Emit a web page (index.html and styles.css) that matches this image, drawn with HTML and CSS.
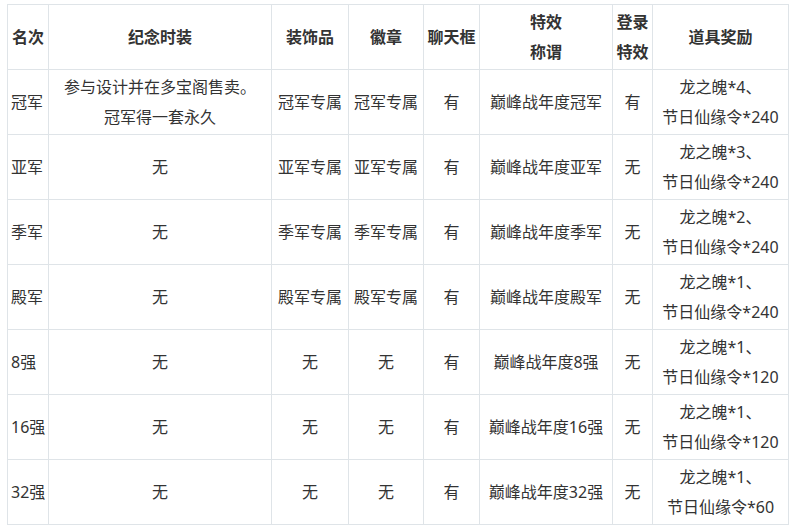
FILE: index.html
```html
<!DOCTYPE html>
<html lang="zh-CN">
<head>
<meta charset="utf-8">
<link rel="stylesheet" href="styles.css">
</head>
<body>
<table class="awards">
  <colgroup>
    <col class="c1"><col class="c2"><col class="c3"><col class="c4"><col class="c5"><col class="c6"><col class="c7"><col class="c8">
  </colgroup>
  <thead>
    <tr>
      <th>名次</th>
      <th>纪念时装</th>
      <th>装饰品</th>
      <th>徽章</th>
      <th>聊天框</th>
      <th>特效<br>称谓</th>
      <th>登录<br>特效</th>
      <th>道具奖励</th>
    </tr>
  </thead>
  <tbody>
    <tr>
      <td>冠军</td>
      <td>参与设计并在多宝阁售卖。<br>冠军得一套永久</td>
      <td>冠军专属</td>
      <td>冠军专属</td>
      <td>有</td>
      <td>巅峰战年度冠军</td>
      <td>有</td>
      <td>龙之魄*4、<br>节日仙缘令*240</td>
    </tr>
    <tr>
      <td>亚军</td>
      <td>无</td>
      <td>亚军专属</td>
      <td>亚军专属</td>
      <td>有</td>
      <td>巅峰战年度亚军</td>
      <td>无</td>
      <td>龙之魄*3、<br>节日仙缘令*240</td>
    </tr>
    <tr>
      <td>季军</td>
      <td>无</td>
      <td>季军专属</td>
      <td>季军专属</td>
      <td>有</td>
      <td>巅峰战年度季军</td>
      <td>无</td>
      <td>龙之魄*2、<br>节日仙缘令*240</td>
    </tr>
    <tr>
      <td>殿军</td>
      <td>无</td>
      <td>殿军专属</td>
      <td>殿军专属</td>
      <td>有</td>
      <td>巅峰战年度殿军</td>
      <td>无</td>
      <td>龙之魄*1、<br>节日仙缘令*240</td>
    </tr>
    <tr>
      <td>8强</td>
      <td>无</td>
      <td>无</td>
      <td>无</td>
      <td>有</td>
      <td>巅峰战年度8强</td>
      <td>无</td>
      <td>龙之魄*1、<br>节日仙缘令*120</td>
    </tr>
    <tr>
      <td>16强</td>
      <td>无</td>
      <td>无</td>
      <td>无</td>
      <td>有</td>
      <td>巅峰战年度16强</td>
      <td>无</td>
      <td>龙之魄*1、<br>节日仙缘令*120</td>
    </tr>
    <tr>
      <td>32强</td>
      <td>无</td>
      <td>无</td>
      <td>无</td>
      <td>有</td>
      <td>巅峰战年度32强</td>
      <td>无</td>
      <td>龙之魄*1、<br>节日仙缘令*60</td>
    </tr>
  </tbody>
</table>
</body>
</html>
```
FILE: styles.css
```css
html, body {
  background: #ffffff;
}
body {
  margin: 4px 0 0 7px;
  font-family: "Noto Sans", "Noto Sans CJK SC", sans-serif;
  font-size: 16px;
  color: #333333;
}
.awards {
  border-collapse: collapse;
  table-layout: fixed;
  width: 781px;
}
.c1 { width: 41px; }
.c2 { width: 223px; }
.c3 { width: 77px; }
.c4 { width: 75px; }
.c5 { width: 56px; }
.c6 { width: 133px; }
.c7 { width: 40px; }
.c8 { width: 136px; }
.awards th,
.awards td {
  border: 1px solid #dfe4e8;
  height: 64px;
  padding: 0;
  line-height: 30px;
  text-align: center;
  vertical-align: middle;
  white-space: nowrap;
}
.awards th {
  font-weight: bold;
  color: #333333;
}
.awards tbody td:first-child {
  text-align: left;
  padding-left: 3px;
}
```
